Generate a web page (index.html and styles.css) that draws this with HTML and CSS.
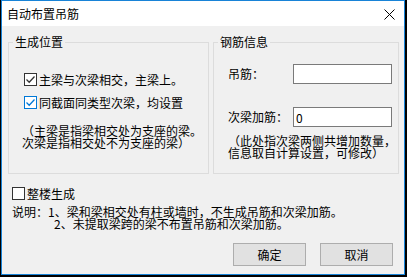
FILE: index.html
```html
<!DOCTYPE html>
<html lang="zh-CN">
<head>
    <meta charset="UTF-8">
    <title>自动布置吊筋</title>
    <link rel="stylesheet" href="styles.css">
</head>
<body>

    <div class="window">
        <div class="titlebar">
            <span class="title">自动布置吊筋</span>
            <svg class="close" width="11" height="11" viewBox="0 0 11 11">
                <path d="M0.5 0.5 L10.5 10.5 M10.5 0.5 L0.5 10.5" stroke="#000" stroke-width="1"/>
            </svg>
        </div>

        <div class="content">
            <div class="groups">
                <fieldset class="group group-pos">
                    <legend>生成位置</legend>
                    <label class="check row-first">
                        <span class="box">
                            <svg width="11" height="11" viewBox="0 0 11 11"><path d="M1.5 5.5 L4.2 8.2 L9.5 2.5" fill="none" stroke="#333" stroke-width="1.3"/></svg>
                        </span>
                        主梁与次梁相交，主梁上。
                    </label>
                    <label class="check row-second">
                        <span class="box box-focus">
                            <svg width="11" height="11" viewBox="0 0 11 11"><path d="M1.5 5.5 L4.2 8.2 L9.5 2.5" fill="none" stroke="#0078d7" stroke-width="1.3"/></svg>
                        </span>
                        同截面同类型次梁，均设置
                    </label>
                    <p class="note note-pos">（主梁是指梁相交处为支座的梁。<br>次梁是指相交处不为支座的梁）</p>
                </fieldset>

                <fieldset class="group group-bar">
                    <legend>钢筋信息</legend>
                    <div class="field field-first">
                        <span class="field-label">吊筋：</span>
                        <input type="text" class="field-input" value="">
                    </div>
                    <div class="field field-second">
                        <span class="field-label">次梁加筋：</span>
                        <input type="text" class="field-input" value="0">
                    </div>
                    <p class="note note-bar">（此处指次梁两侧共增加数量，<br>信息取自计算设置，可修改）</p>
                </fieldset>
            </div>

            <label class="check whole">
                <span class="box"></span>
                整楼生成
            </label>

            <div class="desc">
                <div>说明：1、梁和梁相交处有柱或墙时，不生成吊筋和次梁加筋。</div>
                <div class="desc-second">2、未提取梁跨的梁不布置吊筋和次梁加筋。</div>
            </div>

            <div class="buttons">
                <button class="btn">确定</button>
                <button class="btn">取消</button>
            </div>
        </div>
    </div>

</body>
</html>
```

FILE: styles.css
```css
/* Base */
body {
    margin: 0;
    background: #000;
    font-family: "Noto Sans CJK SC", sans-serif;
    font-size: 12px;
    color: #000;
}

.window {
    width: 404px;
    height: 275px;
    margin-left: 1px;
    box-sizing: border-box;
    border: 1px solid #1883d7;
    background: #f0f0f0;
    display: flex;
    flex-direction: column;
}

/* Title bar */
.titlebar {
    height: 25px;
    background: #fff;
    display: flex;
    align-items: center;
    justify-content: space-between;
    padding: 0 9px 0 5px;
}

.title {
    line-height: 12px;
}

.close {
    display: block;
    margin-top: 1px;
}

/* Content */
.content {
    flex: 1;
    padding: 10px 4px 0 6px;
    display: flex;
    flex-direction: column;
}

.groups {
    display: flex;
    gap: 4px;
    height: 138px;
}

.group {
    margin: 0;
    padding: 0;
    min-width: 0;
    border: 1px solid #dcdcdc;
    box-sizing: border-box;
}

.group legend {
    margin-left: 4px;
    padding: 0 2px;
    line-height: 12px;
}

.group-pos {
    width: 201px;
}

.group-bar {
    width: 186px;
}

/* Checkboxes */
.check {
    display: flex;
    align-items: center;
    height: 13px;
    line-height: 12px;
    gap: 2px;
}

.box {
    width: 13px;
    height: 13px;
    box-sizing: border-box;
    border: 1px solid #333;
    background: #fff;
    display: flex;
    align-items: center;
    justify-content: center;
    flex-shrink: 0;
}

.box svg {
    display: block;
}

.box-focus {
    border-color: #0078d7;
}

.row-first {
    margin: 25px 0 0 15px;
}

.row-second {
    margin: 10px 0 0 15px;
}

.note {
    margin: 0;
    line-height: 12px;
}

.note-pos {
    margin: 16px 0 0 13px;
}

.note-bar {
    margin: 8px 0 0 14px;
}

/* Fields */
.field {
    display: flex;
    align-items: center;
    margin-left: 14px;
}

.field-first {
    margin-top: 16px;
}

.field-second {
    margin-top: 23px;
}

.field-label {
    width: 65px;
    line-height: 12px;
}

.field-input {
    width: 99px;
    height: 20px;
    box-sizing: border-box;
    border: 1px solid #7a7a7a;
    background: #fff;
    padding: 0 2px;
    margin: 0;
    font-family: inherit;
    font-size: 12px;
    outline: none;
}

/* Bottom */
.whole {
    margin: 13px 0 0 4px;
}

.desc {
    margin: 6px 0 0 4px;
    line-height: 12px;
}

.desc-second {
    padding-left: 42px;
}

.buttons {
    display: flex;
    justify-content: flex-end;
    gap: 14px;
    margin: 13px 7px 0 0;
}

.btn {
    width: 73px;
    height: 23px;
    background: #e1e1e1;
    border: 1px solid #adadad;
    font-family: inherit;
    font-size: 12px;
    padding: 0;
    color: #000;
}
```
